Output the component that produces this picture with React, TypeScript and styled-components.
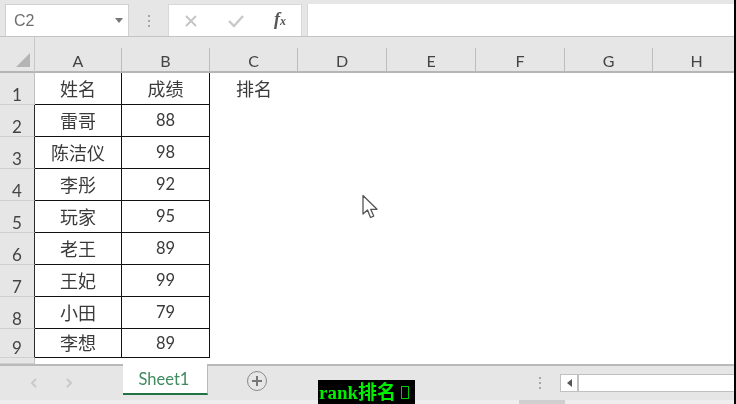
import React from "react";
import styled, { createGlobalStyle } from "styled-components";

const Global = createGlobalStyle`
  html, body { margin: 0; padding: 0; background: #fff; }
  body { font-family: Lato, "Noto Sans CJK SC", sans-serif; }
`;

const Page = styled.div`
  position: relative;
  width: 736px;
  height: 404px;
  overflow: hidden;
  display: flex;
  flex-direction: column;
  background: #fff;
  color: #333;
  filter: blur(0.3px);
`;

const Workbook = styled.div`
  flex: 1;
  width: 736px;
  min-height: 0;
  display: flex;
  flex-direction: column;
  border-right: 2px solid #000;
  box-sizing: border-box;
  overflow: hidden;
`;

const FormulaBar = styled.div`
  height: 37px;
  flex: none;
  display: flex;
  align-items: stretch;
  box-sizing: border-box;
  padding-top: 4px;
  padding-left: 5px;
  background: #e6e6e6;
  border-bottom: 1px solid #c4c4c4;
`;

const NameBox = styled.div`
  width: 124px;
  background: #fff;
  border: 1px solid #d0d0d0;
  border-bottom: none;
  box-sizing: border-box;
  display: flex;
  align-items: center;
  justify-content: space-between;
  padding: 0 5px 0 8px;
  font: 16px "Liberation Sans", sans-serif;
  color: #6e6e6e;
`;

const Caret = styled.i`
  width: 0;
  height: 0;
  border-left: 4.5px solid transparent;
  border-right: 4.5px solid transparent;
  border-top: 5px solid #777;
`;

const Grip = styled.div`
  width: 39px;
  display: flex;
  flex-direction: column;
  align-items: center;
  justify-content: center;
  gap: 3px;
  padding-top: 1px;
  i {
    width: 2px;
    height: 2px;
    background: #a6a6a6;
  }
`;

const FormulaTools = styled.div`
  width: 134px;
  background: #fff;
  border: 1px solid #d8d8d8;
  border-bottom: none;
  box-sizing: border-box;
  display: flex;
  align-items: center;
  padding-left: 15px;
  gap: 29px;
`;

const FxLabel = styled.span`
  font: italic bold 18px "Liberation Serif", serif;
  color: #555;
  margin-top: -2px;
  sub {
    font-size: 12px;
    vertical-align: baseline;
  }
`;

const FormulaInput = styled.div`
  flex: 1;
  margin-left: 5px;
  background: #fff;
  border-left: 1px solid #d8d8d8;
`;

const Sheet = styled.div`
  display: grid;
  grid-template-columns: 35px 87px 88px 88px 89px 89px 89px 88px 88px;
  grid-template-rows: 36px repeat(8, 32px) 29px 6px;
  flex: none;
  height: 327px;
`;

const Corner = styled.div`
  background: #e6e6e6;
  border-bottom: 2px solid #b5b5b5;
  border-right: 1px solid #c8c8c8;
  box-sizing: border-box;
  display: flex;
  align-items: flex-end;
  justify-content: flex-end;
  padding: 0 4px 4px 0;
`;

const ColHead = styled.div`
  background: #e6e6e6;
  border-bottom: 2px solid #b5b5b5;
  box-sizing: border-box;
  font-size: 16px;
  line-height: 1;
  color: #444;
  display: flex;
  align-items: flex-end;
  justify-content: center;
  padding: 0 1px 2px 0;
  position: relative;
  &::after {
    content: "";
    position: absolute;
    right: 0;
    bottom: 0;
    width: 1px;
    height: 23px;
    background: #bdbdbd;
  }
`;

const RowHead = styled.div<{ $dark?: boolean }>`
  background: #e6e6e6;
  border-right: 1px solid ${(p) => (p.$dark ? "#2a2a2a" : "#c0c0c0")};
  border-bottom: 1px solid #d0d0d0;
  box-sizing: border-box;
  font-size: 17px;
  line-height: 1;
  color: #444;
  display: flex;
  align-items: flex-end;
  justify-content: center;
  padding-bottom: 1px;
`;

const Cell = styled.div<{ $boxed?: boolean; $cjk?: boolean }>`
  box-sizing: border-box;
  font-size: ${(p) => (p.$cjk ? "18px" : "16.5px")};
  line-height: 1;
  color: #3a3a3a;
  display: flex;
  align-items: center;
  justify-content: center;
  ${(p) =>
    p.$boxed
      ? `
    border-right: 1px solid #111;
    border-bottom: 1px solid #111;
  `
      : ""}
`;

const Blank = styled.div``;

const BlankFill = styled.div`
  grid-column: span 5;
`;

const TabBar = styled.div`
  flex: 1;
  display: flex;
  align-items: stretch;
  background: #e6e6e6;
  border-top: 2px solid #b9b9b9;
  margin-bottom: 4px;
`;

const TabNav = styled.div`
  width: 123px;
  display: flex;
  align-items: center;
  padding-left: 30px;
  gap: 29px;
  box-sizing: border-box;
`;

const Tab = styled.div`
  width: 85px;
  margin-top: -2px;
  margin-bottom: 5px;
  padding-right: 2px;
  background: #fff;
  border-right: 1px solid #b9b9b9;
  border-bottom: 2px solid #217346;
  box-sizing: border-box;
  display: flex;
  align-items: center;
  justify-content: center;
  color: #3f8a5f;
  font-size: 16.5px;
`;

const AddSheet = styled.div`
  width: 20px;
  height: 20px;
  margin: 5px 0 0 39px;
  border: 1.5px solid #8a8a8a;
  border-radius: 50%;
  box-sizing: border-box;
  display: flex;
  align-items: center;
  justify-content: center;
`;

const TabGrip = styled(Grip)`
  width: auto;
  margin-left: 272px;
  padding-top: 0;
`;

const ScrollTrack = styled.div`
  flex: 1;
  margin: 8px 0 8px 19px;
  display: flex;
  background: #fff;
  border: 1px solid #c0c0c0;
  border-right: none;
`;

const ScrollArrow = styled.div`
  width: 16px;
  border-right: 2px solid #c0c0c0;
  display: flex;
  align-items: center;
  justify-content: center;
  &::before {
    content: "";
    border-top: 4px solid transparent;
    border-bottom: 4px solid transparent;
    border-right: 5px solid #555;
  }
`;

const StatusStrip = styled.div`
  position: absolute;
  left: 0;
  right: 2px;
  bottom: 0;
  height: 4px;
  background: #eeeeee;
`;

const ScrollThumb = styled.div`
  position: absolute;
  left: 519px;
  width: 46px;
  top: 0;
  bottom: 0;
  background: #cfcfcf;
`;

const Caption = styled.div`
  position: absolute;
  left: 318px;
  top: 380px;
  width: 97px;
  height: 24px;
  padding-left: 1px;
  box-sizing: border-box;
  background: #000;
  color: #00f000;
  font: bold 19px "Liberation Serif", "Noto Sans CJK SC", serif;
  line-height: 26px;
  white-space: nowrap;
  overflow: hidden;
`;

const Tofu = styled.span`
  display: inline-block;
  width: 8px;
  height: 13px;
  margin-left: 5px;
  border: 1px solid #00c800;
  box-sizing: border-box;
`;

const Cursor = styled.svg`
  position: absolute;
  left: 361px;
  top: 194px;
`;

const columns = ["A", "B", "C", "D", "E", "F", "G", "H"];
const rows: [string, string][] = [
  ["姓名", "成绩"],
  ["雷哥", "88"],
  ["陈洁仪", "98"],
  ["李彤", "92"],
  ["玩家", "95"],
  ["老王", "89"],
  ["王妃", "99"],
  ["小田", "79"],
  ["李想", "89"],
];

export default function App() {
  return (
    <Page>
      <Global />
      <Workbook>
        <FormulaBar>
          <NameBox>
            C2
            <Caret />
          </NameBox>
          <Grip>
            <i />
            <i />
            <i />
          </Grip>
          <FormulaTools>
            <svg width="14" height="14" viewBox="0 0 14 14" fill="none" stroke="#c4c4c4" strokeWidth="1.8">
              <path d="M2 2 12 12M12 2 2 12" />
            </svg>
            <svg width="18" height="14" viewBox="0 0 18 14" fill="none" stroke="#c9c9c9" strokeWidth="2.4">
              <path d="M2 7 7 12 16 2" />
            </svg>
            <FxLabel>
              f<sub>x</sub>
            </FxLabel>
          </FormulaTools>
          <FormulaInput />
        </FormulaBar>
        <Sheet>
          <Corner>
            <svg width="14" height="14" viewBox="0 0 14 14">
              <path d="M14 0V14H0Z" fill="#b4b4b4" />
            </svg>
          </Corner>
          {columns.map((c) => (
            <ColHead key={c}>{c}</ColHead>
          ))}
          {rows.map((r, i) => (
            <React.Fragment key={i}>
              <RowHead $dark={i > 0}>{i + 1}</RowHead>
              <Cell $boxed $cjk>
                {r[0]}
              </Cell>
              <Cell $boxed $cjk={i === 0}>
                {r[1]}
              </Cell>
              {i === 0 ? <Cell $cjk>排名</Cell> : <Blank />}
              <BlankFill />
            </React.Fragment>
          ))}
          <RowHead />
        </Sheet>
        <TabBar>
          <TabNav>
            <svg width="7" height="10" viewBox="0 0 7 10" fill="none" stroke="#c9c9c9" strokeWidth="2">
              <path d="M6 1 2 5l4 4" />
            </svg>
            <svg width="7" height="10" viewBox="0 0 7 10" fill="none" stroke="#c9c9c9" strokeWidth="2">
              <path d="M1 1l4 4-4 4" />
            </svg>
          </TabNav>
          <Tab>Sheet1</Tab>
          <AddSheet>
            <svg width="10" height="10" viewBox="0 0 10 10" stroke="#777" strokeWidth="2">
              <path d="M5 0v10M0 5h10" />
            </svg>
          </AddSheet>
          <TabGrip>
            <i />
            <i />
            <i />
          </TabGrip>
          <ScrollTrack>
            <ScrollArrow />
          </ScrollTrack>
        </TabBar>
      </Workbook>
      <StatusStrip>
        <ScrollThumb />
      </StatusStrip>
      <Caption>
        rank排名
        <Tofu />
      </Caption>
      <Cursor width="18" height="26" viewBox="0 0 18 26">
        <path d="M2 1.5V20l4.5-4 3 7.5 3.2-1.4-3-6.8H16Z" fill="#fff" stroke="#555" strokeWidth="1.3" strokeLinejoin="round" />
      </Cursor>
    </Page>
  );
}
